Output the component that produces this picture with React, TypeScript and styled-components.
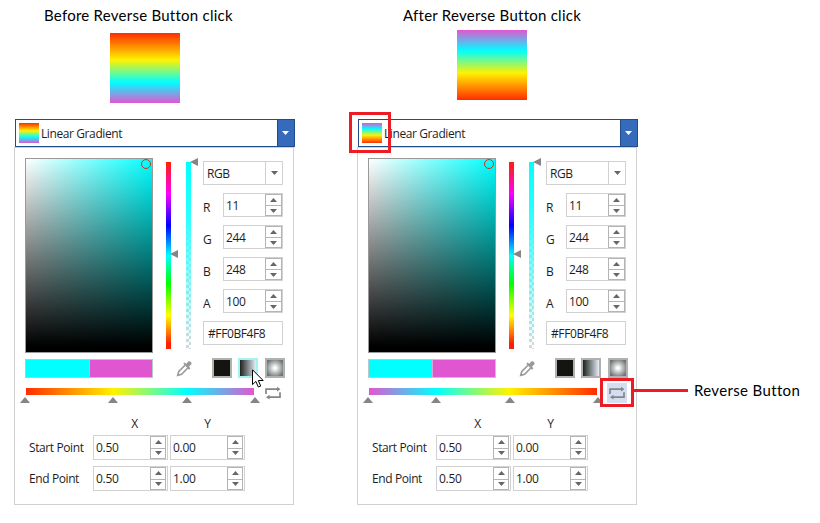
import React from 'react';
import styled, { createGlobalStyle } from 'styled-components';

const GlobalStyle = createGlobalStyle`
  * { box-sizing: border-box; }
  body { margin: 0; background: #fff; }
`;

const STOPS = ['#ff2d00 0%', '#fff200 38.5%', '#00ffff 70.5%', '#e256d0 100%'];
const REVERSED = ['#e256d0 0%', '#00ffff 29.5%', '#fff200 61.5%', '#ff2d00 100%'];

type Reversible = { $reversed: boolean };
const stops = (p: Reversible) => (p.$reversed ? REVERSED : STOPS).join(', ');

const Page = styled.main`
  position: relative;
  width: 820px;
  height: 523px;
  display: flex;
  gap: 62px;
  padding-left: 14px;
  overflow: hidden;
  background: #fff;
  color: #1e1e1e;
  font: 12px/16px 'Open Sans', 'Noto Sans', sans-serif;
  letter-spacing: -0.4px;
`;

const Example = styled.section`
  flex: none;
  width: 281px;
  display: flex;
  flex-direction: column;
`;

const Header = styled.header<Reversible>`
  height: 119px;
  display: flex;
  flex-direction: column;
  gap: ${p => (p.$reversed ? 5 : 8)}px;
  padding-top: 5px;
`;

const Title = styled.h2<{ $indent: number }>`
  margin: 0 0 0 ${p => p.$indent}px;
  color: #000;
  font: 400 15px/20px Lato, sans-serif;
  letter-spacing: 0.25px;
  white-space: nowrap;
`;

const Preview = styled.div<Reversible>`
  width: 70px;
  height: 70px;
  margin-left: ${p => (p.$reversed ? 100 : 96)}px;
  background: linear-gradient(to bottom, ${stops});
`;

const Combo = styled.div`
  flex: none;
  width: 280px;
  height: 28px;
  margin-left: 1px;
  display: flex;
  align-items: center;
  border: 1px solid #1f4d8b;
  background: #fff;
`;

const BrushIcon = styled.div<Reversible>`
  width: 20px;
  height: 20px;
  margin: 0 2px 0 3px;
  background: linear-gradient(to bottom, ${stops});
`;

const ComboLabel = styled.span`
  flex: 1;
  padding-top: 2px;
  white-space: nowrap;
`;

const ComboToggle = styled.div`
  width: 18px;
  height: 28px;
  display: grid;
  place-items: center;
  margin-right: -1px;
  padding-right: 1px;
  border: 1px solid #1f4d8b;
  background: #366abb;
`;

const Panel = styled.div`
  width: 280px;
  height: 358px;
  padding: 10px 10px 0;
  border: 1px solid #d1d1d1;
`;

const Columns = styled.div`
  display: flex;
  height: 201px;
`;

const ColorField = styled.div`
  position: relative;
  width: 128px;
  height: 195px;
  border: 1px solid #999;
  background: linear-gradient(to top, #000 3%, rgba(0, 0, 0, 0)), linear-gradient(to right, #fff, #00ffff);
`;

const Handle = styled.i`
  position: absolute;
  right: 1px;
  top: 0;
  width: 10px;
  height: 10px;
  border: 1.5px solid #d8301c;
  border-radius: 50%;
`;

const Track = styled.div<{ $kind: 'hue' | 'alpha' }>`
  position: relative;
  width: 5px;
  height: 187px;
  margin: 4px 0 0 ${p => (p.$kind === 'hue' ? 13 : 15)}px;
  background: ${p =>
    p.$kind === 'hue'
      ? 'linear-gradient(to bottom, #ff2000, #ff00ff 17%, #0000ff 34%, #00ffff 50%, #00ff00 65%, #ffff00 82%, #ff2000 97%)'
      : 'linear-gradient(to bottom, #00ffff, #30ffff 30%, rgba(0,255,255,0)), repeating-conic-gradient(#d8d8d8 0 25%, #fff 0 50%) 0 0 / 6px 6px'};
`;

const TrackMarker = styled.svg<{ $y: number }>`
  position: absolute;
  left: 4px;
  top: ${p => p.$y - 4}px;
`;

const Fields = styled.div`
  width: 80px;
  margin: 3px 0 0 12px;
  display: flex;
  flex-direction: column;
`;

const Select = styled.div`
  height: 24px;
  margin-bottom: 8px;
  padding: 2px 0 0 3px;
  display: flex;
  align-items: center;
  border: 1px solid #d1d1d1;
`;

const SelectToggle = styled.span`
  width: 17px;
  height: 22px;
  margin: -2px 0 0 auto;
  display: grid;
  place-items: center;
  border-left: 1px solid #d1d1d1;
`;

const Channel = styled.label`
  height: 32px;
  display: flex;
  align-items: flex-start;
`;

const ChannelName = styled.span`
  width: 20px;
  padding-top: 7px;
`;

const SpinBox = styled.span<{ $wide?: boolean }>`
  width: ${p => (p.$wide ? 75 : 60)}px;
  height: ${p => (p.$wide ? 25 : 24)}px;
  display: flex;
  align-items: center;
  padding-left: 2px;
  padding-right: ${p => (p.$wide ? 1 : 0)}px;
  border: 1px solid #d1d1d1;
  letter-spacing: -0.3px;
`;

const SpinValue = styled.span`
  padding-top: 1px;
`;

const Stepper = styled.span<{ $wide?: boolean }>`
  width: ${p => (p.$wide ? 16 : 17)}px;
  height: 100%;
  margin-left: auto;
  display: grid;
  grid-template-rows: 1fr 1fr;
  border: 1px solid #b4b4b4;
`;

const Step = styled.span`
  display: grid;
  place-items: center;
  & + & { border-top: 1px solid #b4b4b4; }
`;

const HexInput = styled.div`
  height: 24px;
  padding: 4px 0 0 4px;
  border: 1px solid #d1d1d1;
`;

const ModeRow = styled.div`
  height: 20px;
  margin: -1px -2px 0 0;
  display: flex;
  align-items: center;
`;

const Compare = styled.div`
  flex: none;
  width: 128px;
  height: 19px;
  display: grid;
  grid-template-columns: 1fr 1fr;
  border: 1px solid #b9c9c9;
`;

const Swatch = styled.span<{ $color: string }>`
  background: ${p => p.$color};
  & + & { border-left: 1px solid #d9a8d8; }
`;

const Dropper = styled.svg`
  flex: none;
  margin: 0 19px 0 23px;
`;

const modes = {
  solid: '#141410',
  linear: 'linear-gradient(to right, #20201e, #777e80 45%, #e8eef6)',
  radial: 'radial-gradient(circle, #fff 8%, #c9cecd 35%, #6c7473 85%)',
};

const ModeButton = styled.button<{ $mode: keyof typeof modes; $selected?: boolean }>`
  flex: none;
  width: 20px;
  height: 20px;
  padding: 0;
  margin-right: ${p => ({ solid: 6, linear: 7, radial: 0 })[p.$mode]}px;
  border: 2px solid ${p => (p.$selected ? '#a4f3f3' : '#b1b1b1')};
  background: ${p => modes[p.$mode]};
`;

const StopsRow = styled.div`
  display: flex;
  height: 20px;
  margin-top: 4px;
  padding-left: 1px;
`;

const StopsBar = styled.div<Reversible>`
  flex: none;
  position: relative;
  width: 228px;
  height: 7px;
  margin-top: 6px;
  background: linear-gradient(to right, ${stops});
`;

const StopMarker = styled.svg<{ $x: number }>`
  position: absolute;
  left: ${p => p.$x - 5}px;
  top: 9px;
`;

const ReverseButton = styled.button<Reversible>`
  flex: none;
  width: 20px;
  height: 20px;
  margin: ${p => (p.$reversed ? '1px 0 0 10px' : '1px 0 0 9px')};
  padding: 0;
  display: grid;
  place-items: center;
  border: 0;
  background: ${p => (p.$reversed ? '#d3def0' : 'transparent')};
`;

const Points = styled.div`
  display: grid;
  grid-template-columns: 64px 75px 75px;
  grid-template-rows: 16px 25px 25px;
  column-gap: 2px;
  row-gap: 6px;
  margin: 13px 0 0 2px;
  align-items: center;
`;

const AxisRow = styled.div`
  grid-column: 1 / -1;
  display: grid;
  grid-template-columns: 73px 73px;
  padding-left: 71px;
  margin-bottom: -2px;
  text-align: center;
`;

const PointRow = styled.div`
  grid-column: 1 / -1;
  display: grid;
  grid-template-columns: subgrid;
  align-items: center;
  margin-top: -4px;
`;

const PointLabel = styled.span`
  padding-left: 2px;
  white-space: nowrap;
`;

const Callout = styled.div<{ $x: number; $y: number; $w: number; $h: number }>`
  position: absolute;
  left: ${p => p.$x}px;
  top: ${p => p.$y}px;
  width: ${p => p.$w}px;
  height: ${p => p.$h}px;
  border: 3px solid #ed1c24;
`;

const CalloutNote = styled.div`
  position: absolute;
  left: 633px;
  top: 380px;
  display: flex;
  align-items: center;
  gap: 6px;
  color: #000;
  font: 15px/20px Lato, sans-serif;
  letter-spacing: 0.35px;
  white-space: nowrap;
  &::before { content: ''; width: 55px; height: 3px; background: #ed1c24; }
`;

const Triangle = ({ up = false, color = '#666' }: { up?: boolean; color?: string }) => (
  <svg width="7" height="4" viewBox="0 0 7 4" fill={color}>
    <path d={up ? 'M3.5 0 7 4H0Z' : 'M0 0H7L3.5 4Z'} />
  </svg>
);

const Spin = ({ value, wide }: { value: string; wide?: boolean }) => (
  <SpinBox $wide={wide}>
    <SpinValue>{value}</SpinValue>
    <Stepper $wide={wide}>
      <Step><Triangle up /></Step>
      <Step><Triangle /></Step>
    </Stepper>
  </SpinBox>
);

const SideMarker = ({ y }: { y: number }) => (
  <TrackMarker $y={y} width="8" height="8" viewBox="0 0 8 8">
    <path d="M0 4 8 0V8Z" fill="#858585" />
  </TrackMarker>
);

const channels: [string, string][] = [['R', '11'], ['G', '244'], ['B', '248'], ['A', '100']];
const points: [string, string, string][] = [['Start Point', '0.50', '0.00'], ['End Point', '0.50', '1.00']];

function Editor({ title, indent, reversed = false, markers }: {
  title: string; indent: number; reversed?: boolean; markers: number[];
}) {
  return (
    <Example>
      <Header $reversed={reversed}>
        <Title $indent={indent}>{title}</Title>
        <Preview $reversed={reversed} />
      </Header>
      <Combo>
        <BrushIcon $reversed={reversed} />
        <ComboLabel>Linear Gradient</ComboLabel>
        <ComboToggle><Triangle color="#fff" /></ComboToggle>
      </Combo>
      <Panel>
        <Columns>
          <ColorField><Handle /></ColorField>
          <Track $kind="hue"><SideMarker y={92} /></Track>
          <Track $kind="alpha"><SideMarker y={0} /></Track>
          <Fields>
            <Select>RGB<SelectToggle><Triangle /></SelectToggle></Select>
            {channels.map(([name, value]) => (
              <Channel key={name}><ChannelName>{name}</ChannelName><Spin value={value} /></Channel>
            ))}
            <HexInput>#FF0BF4F8</HexInput>
          </Fields>
        </Columns>
        <ModeRow>
          <Compare><Swatch $color="#00ffff" /><Swatch $color="#e056d0" /></Compare>
          <Dropper width="17" height="17" viewBox="0 0 17 17">
            <path d="M9 5.2 2.8 11.4 1.7 15.3 5.6 14.2 11.8 8" fill="none" stroke="#999" strokeWidth="1.6" />
            <path d="m7.3 3.7 1.3-1.2 1.7 1.2 2-2.2c1.4-1.3 4.4 1.4 2.9 3l-2.1 2.1 1.2 1.8-1.3 1.3Z" fill="#999" />
          </Dropper>
          <ModeButton $mode="solid" />
          <ModeButton $mode="linear" $selected={!reversed} />
          <ModeButton $mode="radial" />
        </ModeRow>
        <StopsRow>
          <StopsBar $reversed={reversed}>
            {markers.map(x => (
              <StopMarker key={x} $x={x} width="10" height="6" viewBox="0 0 10 6">
                <path d="M5 0 10 6H0Z" fill="#858585" />
              </StopMarker>
            ))}
          </StopsBar>
          <ReverseButton $reversed={reversed}>
            <svg width="18" height="14" viewBox="0 0 18 14">
              <path d="M2 8V3.2H14M16 6.2V11.2H4" fill="none" stroke="#858585" strokeWidth="1.7" />
              <path d="M13 .8 16.5 3.2 13 5.6ZM5.5 8.8 2 11.2 5.5 13.6Z" fill="#858585" />
            </svg>
          </ReverseButton>
        </StopsRow>
        <Points>
          <AxisRow><span>X</span><span>Y</span></AxisRow>
          {points.map(([label, x, y]) => (
            <PointRow key={label}>
              <PointLabel>{label}</PointLabel><Spin wide value={x} /><Spin wide value={y} />
            </PointRow>
          ))}
        </Points>
      </Panel>
    </Example>
  );
}

const Pointer = styled.svg`
  position: absolute;
  left: 252px;
  top: 369px;
`;

export default function App() {
  return (
    <Page>
      <GlobalStyle />
      <Editor title="Before Reverse Button click" indent={30} markers={[-1, 87, 161, 229]} />
      <Editor title="After Reverse Button click" indent={46} reversed markers={[-1, 67, 141, 229]} />
      <Pointer width="12" height="19" viewBox="0 0 12 19">
        <path d="M.5.8V15.6L3.9 12.4 6.3 18 8.7 17 6.3 11.5H11.2Z" fill="#fff" stroke="#000" />
      </Pointer>
      <Callout $x={349} $y={112} $w={42} $h={41} />
      <Callout $x={600} $y={378} $w={34} $h={29} />
      <CalloutNote>Reverse Button</CalloutNote>
    </Page>
  );
}
